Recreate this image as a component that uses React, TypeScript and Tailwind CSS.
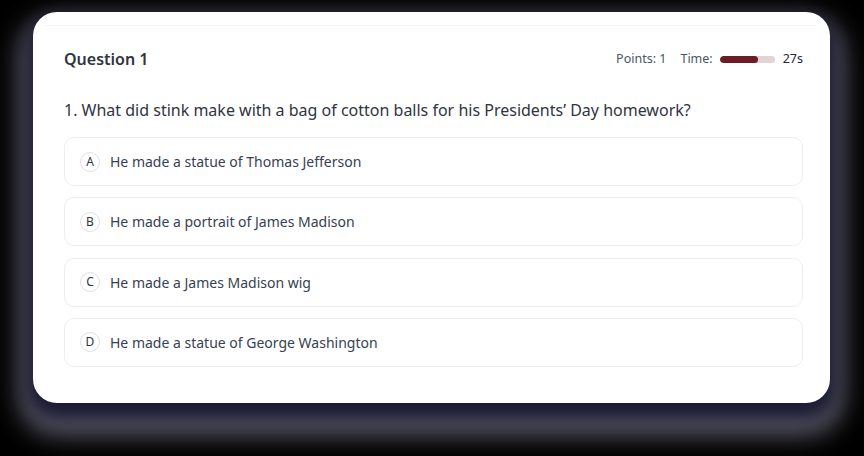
const options = [
  { key: 'A', text: 'He made a statue of Thomas Jefferson' },
  { key: 'B', text: 'He made a portrait of James Madison' },
  { key: 'C', text: 'He made a James Madison wig' },
  { key: 'D', text: 'He made a statue of George Washington' },
]

export default function App() {
  return (
    <div
      className="w-[864px] h-[456px] bg-black pt-[12px] pl-[33px] overflow-hidden"
      style={{ fontFamily: '"Noto Sans", sans-serif' }}
    >
      <div className="w-[797px] h-[391px] bg-white rounded-[24px] shadow-[0_10px_16px_6px_#1b1b33,0_18px_26px_14px_#5e5e6c] relative">
        {/* faint inner top rule */}
        <div className="absolute left-[12px] right-[14px] top-[13px] h-px bg-[#f3f4f6]" />

        <div className="pl-[31px] pr-[27px] pt-[35px]">
          {/* Header */}
          <div className="flex items-center justify-between h-6">
            <h3 className="text-[16px] font-semibold text-[#2f3441]">Question 1</h3>
            <div className="flex items-center text-[12.5px] text-[#4b5563]">
              <span>Points: 1</span>
              <span className="ml-[14px]">Time:</span>
              <div className="ml-[7px] w-[55px] h-[7px] rounded-full bg-[#e2d3d5] overflow-hidden">
                <div className="h-full w-[38px] rounded-full bg-[#6b1c24]" />
              </div>
              <span className="ml-[8px] text-[#1f2937]">27s</span>
            </div>
          </div>

          {/* Question */}
          <p className="mt-[27px] text-[16px] leading-6 text-[#2f3441]">
            1. What did stink make with a bag of cotton balls for his Presidents’ Day homework?
          </p>

          {/* Options */}
          <div className="mt-[15px] flex flex-col gap-[11.33px]">
            {options.map(({ key, text }) => (
              <div
                key={key}
                className="h-[49px] flex items-center gap-[10px] px-[15px] border border-[#eceef1] rounded-[10px]"
              >
                <span className="w-5 h-5 rounded-full border border-[#dfe1e5] flex items-center justify-center text-[12px] text-[#2f3441]">
                  {key}
                </span>
                <span className="text-[14px] text-[#374151]">{text}</span>
              </div>
            ))}
          </div>
        </div>
      </div>
    </div>
  )
}
